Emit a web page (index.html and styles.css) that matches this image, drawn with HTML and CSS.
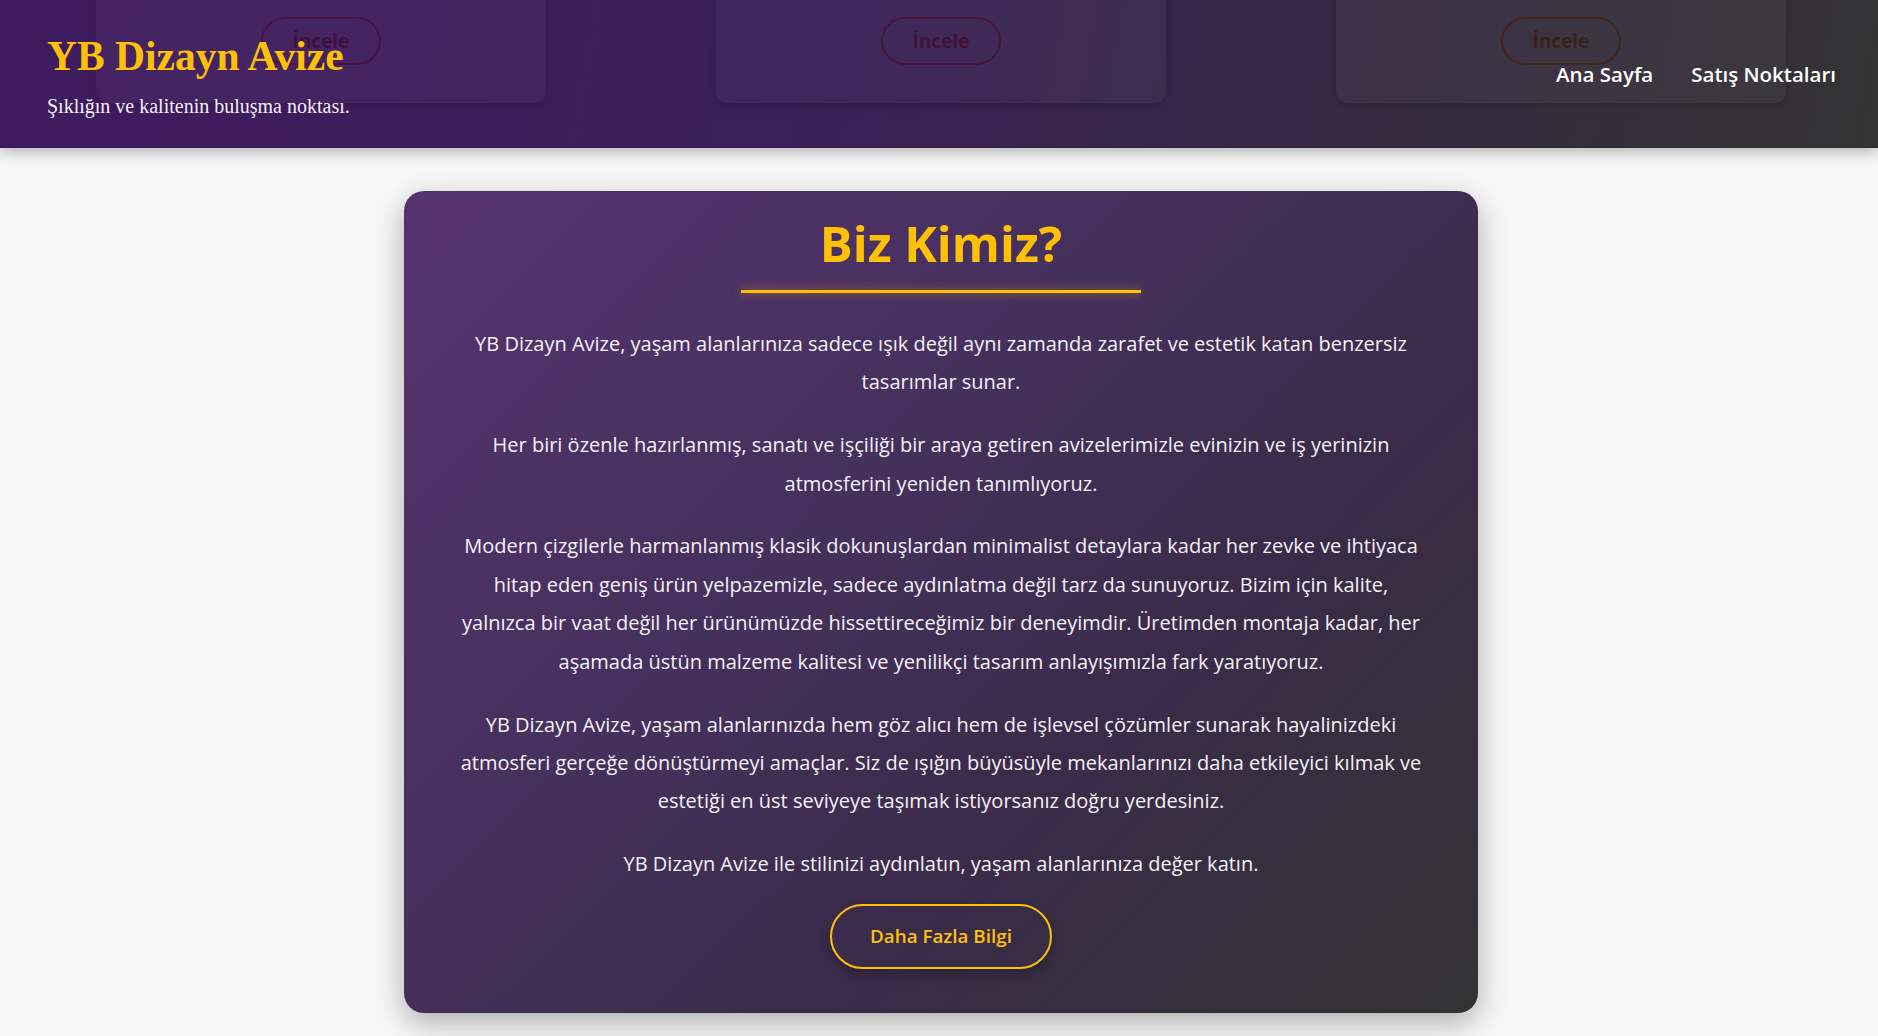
FILE: index.html
```html
<!DOCTYPE html>
<html lang="tr">
<head>
<meta charset="utf-8">
<title>YB Dizayn Avize</title>
<link rel="stylesheet" href="styles.css">
</head>
<body>
<header class="site-header">
  <div class="ghost-products" aria-hidden="true">
    <div class="ghost-card"><span class="ghost-btn">İncele</span></div>
    <div class="ghost-card"><span class="ghost-btn">İncele</span></div>
    <div class="ghost-card"><span class="ghost-btn ghost-btn-warm">İncele</span></div>
  </div>
  <div class="brand">
    <h1 class="brand-title">YB Dizayn Avize</h1>
    <p class="brand-tagline">Şıklığın ve kalitenin buluşma noktası.</p>
  </div>
  <nav class="main-nav">
    <a href="#" class="nav-link">Ana Sayfa</a>
    <a href="#" class="nav-link">Satış Noktaları</a>
  </nav>
</header>
<main class="page">
  <section class="about-card">
    <h2 class="about-title">Biz Kimiz?</h2>
    <div class="about-rule"></div>
    <p class="about-text">YB Dizayn Avize, yaşam alanlarınıza sadece ışık değil aynı zamanda zarafet ve estetik katan benzersiz tasarımlar sunar.</p>
    <p class="about-text">Her biri özenle hazırlanmış, sanatı ve işçiliği bir araya getiren avizelerimizle evinizin ve iş yerinizin atmosferini yeniden tanımlıyoruz.</p>
    <p class="about-text">Modern çizgilerle harmanlanmış klasik dokunuşlardan minimalist detaylara kadar her zevke ve ihtiyaca hitap eden geniş ürün yelpazemizle, sadece aydınlatma değil tarz da sunuyoruz. Bizim için kalite, yalnızca bir vaat değil her ürünümüzde hissettireceğimiz bir deneyimdir. Üretimden montaja kadar, her aşamada üstün malzeme kalitesi ve yenilikçi tasarım anlayışımızla fark yaratıyoruz.</p>
    <p class="about-text">YB Dizayn Avize, yaşam alanlarınızda hem göz alıcı hem de işlevsel çözümler sunarak hayalinizdeki atmosferi gerçeğe dönüştürmeyi amaçlar. Siz de ışığın büyüsüyle mekanlarınızı daha etkileyici kılmak ve estetiği en üst seviyeye taşımak istiyorsanız doğru yerdesiniz.</p>
    <p class="about-text about-text-last">YB Dizayn Avize ile stilinizi aydınlatın, yaşam alanlarınıza değer katın.</p>
    <div class="about-action">
      <a href="#" class="more-btn">Daha Fazla Bilgi</a>
    </div>
  </section>
</main>
</body>
</html>
```

FILE: styles.css
```css
* {
  box-sizing: border-box;
}

html, body {
  margin: 0;
  padding: 0;
}

body {
  background: #f7f7f7;
  font-family: "Open Sans", "Noto Sans", sans-serif;
  color: #fff;
  height: 1036px;
  overflow: hidden;
}

.site-header {
  position: relative;
  height: 148px;
  display: flex;
  justify-content: space-between;
  align-items: flex-start;
  padding: 0 42px 0 47px;
  background: linear-gradient(100deg, #3f1a60 0%, #3b2056 45%, #352a40 75%, #333333 100%);
  box-shadow: 0 4px 14px rgba(0, 0, 0, 0.28);
  overflow: hidden;
  z-index: 2;
}

.ghost-products {
  position: absolute;
  top: -40px;
  left: 96px;
  display: grid;
  grid-template-columns: repeat(3, 450px);
  column-gap: 170px;
}

.ghost-card {
  height: 143px;
  border-radius: 12px;
  background: rgba(255, 255, 255, 0.035);
  box-shadow: 0 3px 10px rgba(0, 0, 0, 0.12);
  display: flex;
  justify-content: center;
  align-items: flex-start;
  padding-top: 57px;
}

.ghost-btn {
  width: 120px;
  height: 48px;
  border: 2px solid rgba(75, 10, 45, 0.6);
  border-radius: 24px;
  display: flex;
  align-items: center;
  justify-content: center;
  font-weight: 700;
  font-size: 19px;
  color: rgba(65, 8, 45, 0.7);
}

.ghost-btn-warm {
  border-color: rgba(65, 30, 5, 0.6);
  color: rgba(55, 25, 5, 0.7);
}

.brand {
  position: relative;
  padding-top: 36px;
}

.brand-title {
  margin: 0;
  font-family: "Liberation Serif", "Times New Roman", serif;
  font-weight: 700;
  font-size: 41.5px;
  line-height: 1;
  color: #ffc107;
}

.brand-tagline {
  margin: 16.5px 0 0;
  font-family: "Liberation Serif", "Times New Roman", serif;
  font-size: 20px;
  line-height: 24px;
  color: #f4f0f6;
}

.main-nav {
  position: relative;
  display: flex;
  gap: 38px;
  padding-top: 62px;
}

.nav-link {
  color: #ffffff;
  text-decoration: none;
  font-weight: 600;
  font-size: 20.5px;
  line-height: 24px;
}

.page {
  padding: 43px 0 0 4px;
}

.about-card {
  width: 1074px;
  margin: 0 auto;
  padding: 24px 54px 44px;
  border-radius: 20px;
  background: linear-gradient(135deg, #55336f 0%, #45305c 40%, #3a2b49 65%, #333333 100%);
  box-shadow: 0 10px 30px rgba(0, 0, 0, 0.3);
  text-align: center;
}

.about-title {
  margin: 0;
  font-size: 49px;
  line-height: 57.6px;
  font-weight: 700;
  color: #ffc107;
}

.about-rule {
  width: 400px;
  height: 3px;
  margin: 17.2px auto 32px;
  background: #ffc107;
  box-shadow: 0 0 10px rgba(255, 193, 7, 0.6);
}

.about-text {
  margin: 0 0 24.5px;
  font-size: 20px;
  line-height: 38.4px;
  color: #f4f1f6;
}

.about-text-last {
  margin-bottom: 0;
}

.about-action {
  margin-top: 20.3px;
}

.more-btn {
  display: inline-block;
  padding: 18px 38px;
  border: 2px solid #ffc107;
  border-radius: 34px;
  color: #ffc107;
  text-decoration: none;
  font-weight: 600;
  font-size: 18.8px;
  line-height: 25px;
  box-shadow: 0 5px 12px rgba(0, 0, 0, 0.25);
}
```
